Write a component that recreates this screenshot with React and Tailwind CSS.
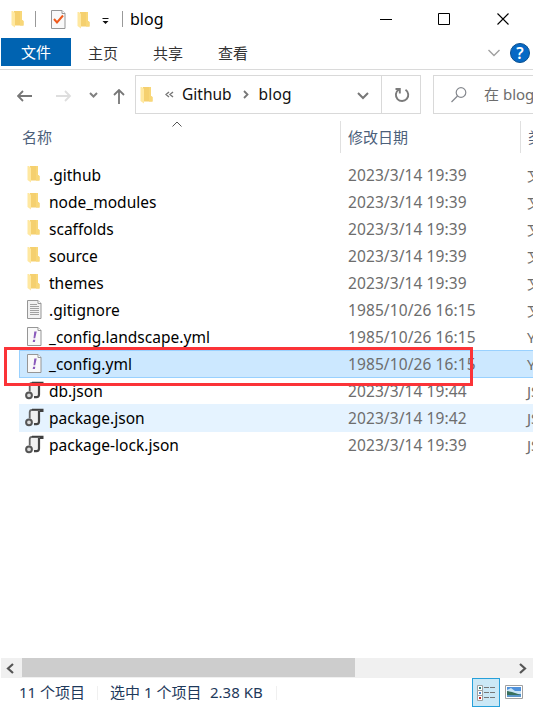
import React from "react";

function Folder({ className = "" }) {
  return (
    <svg className={"shrink-0 " + className} width="13" height="18" viewBox="0 0 13 18">
      <path d="M3 1h8v9l1.500 1v4.500H3z" fill="#f5d06f" />
      <path d="M9 1h2v9l1.500 1v4.500H9z" fill="#f8d778" />
      <path d="M0.500 1h1.500l2 2v14.500l-3.500-2.500z" fill="#ffe8a0" />
    </svg>
  );
}

function Page({ kind }) {
  return (
    <svg className="shrink-0" width="15" height="19" viewBox="0 0 15 19">
      <path d="M.5 .5h10.500l3 3v15H.5z" fill={kind === "text" ? "#f1f1f1" : "#f9f9f9"} stroke="#969696" />
      <path d="M11 .5v3h3" fill="#fff" stroke="#969696" />
      {kind === "text" && <path d="M3 4.500h7M3 6.500h9M3 8.500h9M3 10.500h9M3 12.500h9M3 14.500h9" stroke="#a0a0a0" />}
      {kind === "yml" && <path d="M7.300 4.500h2.400L8.200 11.300H6.500zM6.100 12.700h2.200l-.4 2.200h-2.200z" fill="#8a5bbb" />}
      {kind === "check" && <path d="M3 9l3 3.500L12 5.500" fill="none" stroke="#ef5a1c" strokeWidth="2" />}
    </svg>
  );
}

function JsonIcon() {
  return (
    <svg className="-ml-[2px] shrink-0" width="19" height="19" viewBox="0 0 19 19">
      <path d="M5 2h9v13.500H8l-3-5z" fill="#f0f0f0" />
      <path d="M4.700 10.500V4.300Q4.700 1.800 7 1.800H17.500" fill="none" stroke="#666" strokeWidth="1.800" />
      <path d="M7 1.600H17.600V3H15" fill="none" stroke="#3f3f3f" strokeWidth="1.800" />
      <path d="M14 3v10.500q0 2.600-2.500 2.600H9" fill="none" stroke="#444" strokeWidth="2.200" />
      <circle cx="4" cy="14.300" r="2.900" fill="#dcdcdc" stroke="#555" strokeWidth="2" />
    </svg>
  );
}

function Icon({ d, w = 16, h = 16, color = "#666", sw = 1.8, className = "" }) {
  return (
    <svg className={"shrink-0 " + className} width={w} height={h} viewBox={`0 0 ${w} ${h}`} fill="none" stroke={color} strokeWidth={sw}>
      <path d={d} />
    </svg>
  );
}

const files = [
  { icon: "folder", name: ".github", date: "2023/3/14 19:39", type: "文件夹" },
  { icon: "folder", name: "node_modules", date: "2023/3/14 19:39", type: "文件夹" },
  { icon: "folder", name: "scaffolds", date: "2023/3/14 19:39", type: "文件夹" },
  { icon: "folder", name: "source", date: "2023/3/14 19:39", type: "文件夹" },
  { icon: "folder", name: "themes", date: "2023/3/14 19:39", type: "文件夹" },
  { icon: "text", name: ".gitignore", date: "1985/10/26 16:15", type: "文本文档" },
  { icon: "yml", name: "_config.landscape.yml", date: "1985/10/26 16:15", type: "YML 文件" },
  { icon: "yml", name: "_config.yml", date: "1985/10/26 16:15", type: "YML 文件", state: "selected" },
  { icon: "json", name: "db.json", date: "2023/3/14 19:44", type: "JSON 文件" },
  { icon: "json", name: "package.json", date: "2023/3/14 19:42", type: "JSON 文件", state: "hover" },
  { icon: "json", name: "package-lock.json", date: "2023/3/14 19:39", type: "JSON 文件" },
];

function FileRow({ file }) {
  const look =
    file.state === "selected"
      ? "border-[#99d1ff] bg-[#cce8ff]"
      : file.state === "hover"
        ? "border-[#e5f3ff] bg-[#e5f3ff]"
        : "border-transparent";
  return (
    <div className={"-mb-px ml-[19px] flex h-7 items-center border border-r-0 " + look}>
      <div className="flex w-[29px] shrink-0 items-center pb-[2px] pl-[7px]">
        {file.icon === "folder" ? <Folder /> : file.icon === "json" ? <JsonIcon /> : <Page kind={file.icon} />}
      </div>
      <div className="w-[299px] shrink-0 text-[15.5px] tracking-[0.02px] text-black">{file.name}</div>
      <div className="w-[179px] shrink-0 text-[15.5px] tracking-[0.1px] text-[#6d6d6d]">{file.date}</div>
      <div className="text-[#6d6d6d]">{file.type}</div>
    </div>
  );
}

export default function App() {
  return (
    <div className="relative h-[708px] w-[534px] overflow-hidden bg-white pr-px font-['Noto_Sans','Noto_Sans_CJK_SC',sans-serif] text-[15px] leading-5 whitespace-nowrap">
      <div className="flex h-[708px] flex-col overflow-hidden">
        <div className="flex h-[38px] shrink-0 items-center pl-[11px]">
          <Folder />
          <div className="ml-[11px] h-4 w-px bg-[#999]" />
          <div className="ml-[15px]"><Page kind="check" /></div>
          <Folder className="mt-px ml-[11px]" />
          <svg className="mt-[3px] ml-[11px]" width="9" height="8" viewBox="0 0 9 8">
            <path d="M1.500 1h6v1h-6zM1.500 4h6L4.500 7z" fill="#111" />
          </svg>
          <div className="ml-[12px] h-4 w-px bg-[#999]" />
          <div className="ml-[7px] text-base text-black">blog</div>
          <div className="mr-[24px] ml-auto flex items-center">
            <Icon d="M0 6.500h12" w={12} h={13} color="#000" sw={1} />
            <Icon d="M.5 .5h11v11H.5z" w={12} h={12} color="#000" sw={1} className="ml-[46px]" />
            <Icon d="M.5 .5l11 11M11.500 .5l-11 11" w={12} h={12} color="#000" sw={1.1} className="ml-[47px]" />
          </div>
        </div>

        <div className="flex h-8 shrink-0 items-start border-b border-[#dadada] text-[#333]">
          <div className="ml-px flex h-7 w-[70px] items-center justify-center bg-[#0063b1] pb-px text-white">文件</div>
          <div className="mt-[5px] ml-[17px]">主页</div>
          <div className="mt-[5px] ml-[35px]">共享</div>
          <div className="mt-[5px] ml-[35px]">查看</div>
          <Icon className="mt-[11px] mr-[10px] ml-auto" d="M.5 1l5.500 5.500L11.500 1" w={12} h={8} color="#a0a0a0" sw={1.400} />
          <div className="mt-[5px] mr-[3px] flex h-5 w-5 items-center justify-center rounded-full border border-[#0a4f8f] bg-[#0669c5] text-base font-semibold text-white">?</div>
        </div>

        <div className="flex h-[44px] shrink-0 items-center">
          <Icon className="mt-[7px] ml-[17px]" d="M15 6H1M6 1L1 6l5 5" w={16} h={12} color="#777" />
          <Icon className="mt-[7px] ml-[23px]" d="M0 6h14M9 1l5 5-5 5" w={16} h={12} color="#dedede" />
          <Icon className="mt-[7px] ml-[17px]" d="M1 1l3.500 3.500L8 1" w={9} h={7} color="#808080" sw={2} />
          <Icon className="mt-[8px] ml-[15px]" d="M6 15V1M1 6l5-5 5 5" w={12} h={15} color="#777" />
          <div className="mt-[5px] ml-[10px] flex h-[39px] w-[286px] shrink-0 items-center border border-[#d9d9d9]">
            <Folder className="ml-[4px]" />
            <Icon className="ml-[12px]" d="M4 1L1 3.500 4 6M8 1L5 3.500 8 6" w={9} h={7} color="#777" sw={1.400} />
            <div className="mb-[2px] ml-[8px] text-[15.5px] text-[#111]">Github</div>
            <Icon className="ml-[11px]" d="M1 1l3.500 3.500L1 8" w={6} h={9} color="#777" sw={1.800} />
            <div className="mb-[2px] ml-[10px] text-[15.5px] tracking-[0.2px] text-[#111]">blog</div>
            <Icon className="mt-[3px] mr-[12px] ml-auto" d="M1 1l5 5 5-5" w={12} h={8} color="#777" sw={2} />
            <div className="flex h-full w-[39px] items-center justify-center border-l border-[#d9d9d9]">
              <svg className="ml-[2px]" width="16" height="16" viewBox="0 0 16 16" fill="none" stroke="#7a7a7a" strokeWidth="1.900">
                <path d="M11.500 2.700A6.200 6.200 0 1 1 4.500 2.800M1.500 2h4.300v4.500" />
              </svg>
            </div>
          </div>
          <div className="mt-[5px] ml-[12px] flex h-[39px] w-[240px] shrink-0 items-center border border-[#d9d9d9]">
            <svg className="ml-[17px] shrink-0" width="16" height="16" viewBox="0 0 16 16" fill="none" stroke="#85888e" strokeWidth="1.200">
              <circle cx="10" cy="5.500" r="4.800" />
              <path d="M6.500 9L.5 15" />
            </svg>
            <div className="mb-[2px] ml-[17px] text-[#6d6d6d]">在 blog 中搜索</div>
          </div>
        </div>

        <div className="mt-[7px] flex h-8 shrink-0 items-center text-[#4c607a]">
          <div className="flex h-8 w-[341px] shrink-0 items-center border-r border-[#e0e0e0] pl-[22px]">
            <div>名称</div>
            <Icon className="mb-[26px] ml-[120px]" d="M.5 5.500l4.500-4.500 4.500 4.500" w={10} h={6} color="#555" sw={1} />
          </div>
          <div className="flex h-8 w-[180px] shrink-0 items-center border-r border-[#e0e0e0] pl-[7px]">修改日期</div>
          <div className="ml-[7px]">类型</div>
        </div>

        <div className="mt-[8px] h-[497px] shrink-0 overflow-hidden">
          {files.map((f) => <FileRow key={f.name} file={f} />)}
        </div>

        <div className="ml-px flex h-5 shrink-0 items-center bg-[#f0f0f0]">
          <Icon className="ml-[5px]" d="M7 1L2 5.500 7 10" w={9} h={11} color="#555" sw={2.200} />
          <div className="mb-px ml-[7px] h-[19px] w-[333px] bg-[#cdcdcd]" />
          <Icon className="mr-[6px] ml-auto" d="M2 1l5 4.500L2 10" w={9} h={11} color="#555" sw={2.200} />
        </div>

        <div className="flex h-[30px] shrink-0 items-center text-[15px] text-[#1e395b]">
          <div className="mb-[2px] ml-[19px] w-[78px]">11 个项目</div>
          <div className="h-[14px] w-px bg-[#f0f0f0]" />
          <div className="mb-[2px] ml-[12px] w-[100px]">选中 1 个项目</div>
          <div className="mb-[2px] w-[66px]">2.38 KB</div>
          <div className="h-[14px] w-px bg-[#f0f0f0]" />
          <div className="ml-auto flex h-[29px] w-7 items-center justify-center self-start border border-[#26a0da] bg-[#cbe8f6]">
            <svg width="18" height="16" viewBox="0 0 18 16">
              <path d="M.5 .5h5v5h-5zM.5 5.500h5v5h-5zM.5 10.500h5v5h-5z" fill="#fff" stroke="#a0a0a0" />
              <path d="M2 2h2v2H2z" fill="#347f7b" />
              <path d="M2 7h2v2H2z" fill="#4e86c4" />
              <path d="M2 12h2v2H2z" fill="#c32b24" />
              <path d="M7 2.500h5M13 2.500h5M7 7.500h5M13 7.500h5M7 12.500h5M13 12.500h5" stroke="#777" />
            </svg>
          </div>
          <svg className="mr-[10px] mb-[2px] ml-[5px]" width="18" height="14" viewBox="0 0 18 14">
            <path d="M.5 .5h17v13H.5z" fill="#fff" stroke="#a0a0a0" />
            <path d="M2 2h14v10H2z" fill="#4f91db" />
            <path d="M2 5l4-2 4 3h6v3H2z" fill="#c8e4f6" />
            <path d="M2 6l5 1 9 3H2z" fill="#38705d" />
            <path d="M2 10h14v2H2z" fill="#5a96ca" />
          </svg>
        </div>
      </div>
      <div className="absolute top-[347px] left-[4px] h-[39px] w-[469px] border-3 border-[#fb3338]" />
    </div>
  );
}
